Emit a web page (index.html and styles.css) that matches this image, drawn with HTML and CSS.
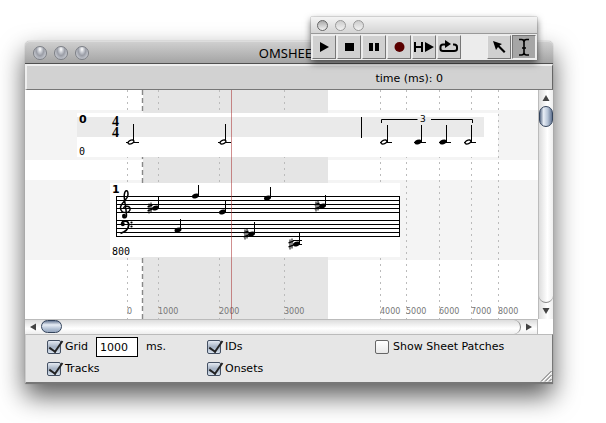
FILE: index.html
```html
<!DOCTYPE html>
<html lang="en">
<head>
<meta charset="utf-8">
<title>OMSHEET</title>
<link rel="stylesheet" href="styles.css">
</head>
<body>
<main class="window">
  <header class="titlebar">
    <div class="lights">
      <button class="light" aria-label="Close"></button>
      <button class="light" aria-label="Minimize"></button>
      <button class="light" aria-label="Zoom"></button>
    </div>
    <h1 class="title">OMSHEET</h1>
  </header>
  <div class="infobar"><span class="time">time (ms): 0</span></div>
  <div class="workspace">
    <svg class="score" role="img" aria-label="Score sheet">
      <defs>
        <g id="filled"><ellipse rx="3.6" ry="2.3" transform="rotate(-20)"/></g>
        <g id="half"><ellipse rx="3.1" ry="1.8" transform="rotate(-22)" fill="#fff" stroke="#000" stroke-width="1.3"/></g>
        <g id="sharp" stroke="#000" fill="none"><path d="M-1-4.500v10M1-5.500v10"/><path d="M-2.500-1.200l5-1.600M-2.500 2.800l5-1.600" stroke-width="1.300"/></g>
      </defs>
      <g transform="translate(-25 -90)">
        <rect class="track" x="25" y="110" width="100%" height="50"/>
        <rect class="track" x="25" y="180" width="100%" height="80"/>
        <rect class="range" x="143" y="90" width="185" height="230"/>
        <path class="grid" d="M127.500 90v230M158.500 90v230M219.500 90v230M284.500 90v230M380.500 90v230M406.500 90v230M439.500 90v230M471.500 90v230M498.500 90v230"/>
        <path class="start" d="M142.500 90v230"/>
        <rect class="paper" x="77" y="113" width="421" height="44"/>
        <rect class="bar" x="77" y="117" width="407" height="20"/>
        <rect class="paper" x="110" y="183" width="290" height="74"/>
        <g class="ticks">
          <text x="127" y="314">0</text><text x="158" y="314">1000</text><text x="219" y="314">2000</text><text x="284" y="314">3000</text><text x="380" y="314">4000</text><text x="406" y="314">5000</text><text x="439" y="314">6000</text><text x="471" y="314">7000</text><text x="498" y="314">8000</text>
        </g>
        <text class="id" x="79" y="123">0</text>
        <text class="onset" x="79" y="155">0</text>
        <text class="meter" x="112" y="126">4</text>
        <text class="meter" x="112" y="137">4</text>
        <path class="line" d="M133.500 124v18M126 142.500h13M225.500 124v18M218 142.500h13M361.500 117v21M387.500 125v17M380 142.500h12M421.500 125v17M414 142.500h12M446.500 125v17M439 142.500h12M471.500 125v17M464 142.500h12M381.500 123v-3.500h36M431 119.500h41.500v3.500"/>
        <text class="tuplet" x="420" y="122">3</text>
        <use href="#half" x="131" y="142"/><use href="#half" x="223" y="142"/><use href="#half" x="384" y="142"/><use href="#filled" x="418" y="142"/><use href="#filled" x="443" y="142"/><use href="#half" x="468" y="142"/>

        <text class="id" x="112" y="193">1</text>
        <text class="onset" x="112" y="255">800</text>
        <path class="line" d="M116 196.500h284M116 200.500h284M116 204.500h284M116 208.500h284M116 212.500h284M116 220.500h284M116 224.500h284M116 228.500h284M116 232.500h284M116 236.500h284M116.500 196v41M399.500 196v41M293 240.500h9M293 244.500h9"/>
        <path class="clef" d="M123.500 209c-.5-3.500 6-4 6.600-.3c.5 4.800-9 5.500-9.600-.5c-.6-5.200 7.300-8 7.500-13.700c.1-5.500-3-4.800-3.700 0c-.6 4.500 1.800 12 2.200 20.500c.1 3.500-3.500 3.500-3.700 1.500"/>
        <circle cx="124" cy="215.800" r="2"/>
        <path class="clef bass" d="M121.500 224.500c.8-5 7.500-4.500 7.200.8c-.3 4-3.500 6.500-8.200 8"/>
        <circle cx="122.800" cy="224.300" r="2"/><circle cx="131.500" cy="222.500" r="1.100"/><circle cx="131.500" cy="226.500" r="1.100"/>
        <path class="line" d="M158.500 197v11M180.500 219v11M198.500 185v11M225.500 201v11M254.500 222v12M270.500 187v11M325.500 195v11M299.500 233v11"/>
        <use href="#sharp" x="150" y="208"/><use href="#filled" x="155.500" y="208"/>
        <use href="#filled" x="178" y="230"/><use href="#filled" x="195.500" y="196"/><use href="#filled" x="222.500" y="212"/>
        <use href="#sharp" x="246" y="234"/><use href="#filled" x="251.500" y="234"/>
        <use href="#filled" x="267.500" y="198"/>
        <use href="#sharp" x="317" y="206"/><use href="#filled" x="322.500" y="206"/>
        <use href="#sharp" x="291" y="244"/><use href="#filled" x="296.500" y="244"/>
        <path class="playhead" d="M231.500 90v230"/>
      </g>
    </svg>
    <div class="vscroll">
      <button class="arrow" aria-label="Scroll up"><svg width="8" height="7"><path d="M4 0l3.500 6h-7z"/></svg></button>
      <div class="vtrack"><div class="vthumb"></div></div>
      <button class="arrow" aria-label="Scroll down"><svg width="8" height="7"><path d="M.5 0h7L4 6z"/></svg></button>
    </div>
    <div class="hscroll">
      <button class="arrow" aria-label="Scroll left"><svg width="7" height="8"><path d="M6 .5v7L0 4z"/></svg></button>
      <div class="htrack"><div class="hthumb"></div></div>
      <button class="arrow" aria-label="Scroll right"><svg width="7" height="8"><path d="M0 .5v7L6 4z"/></svg></button>
    </div>
  </div>
  <form class="options">
    <div class="row">
      <label class="check"><input type="checkbox" checked><span>Grid</span></label>
      <input class="step" type="text" value="1000" aria-label="Grid step in milliseconds">
      <span class="unit">ms.</span>
    </div>
    <label class="check"><input type="checkbox" checked><span>IDs</span></label>
    <label class="check"><input type="checkbox"><span>Show Sheet Patches</span></label>
    <label class="check"><input type="checkbox" checked><span>Tracks</span></label>
    <label class="check"><input type="checkbox" checked><span>Onsets</span></label>
    <svg class="grip" width="12" height="12" aria-hidden="true"><path d="M1 11.500L11.500 1M5 11.500L11.500 5M9 11.500L11.500 9" stroke="#666"/><path d="M2.500 11.500l9-9M6.500 11.500l5-5" stroke="#fff"/></svg>
  </form>
</main>
<aside class="palette" aria-label="Player">
  <div class="palette-title">
    <button class="dot dark" aria-label="Close palette"></button><button class="dot" aria-label="Minimize palette"></button><button class="dot" aria-label="Zoom palette"></button>
  </div>
  <div class="tools">
    <button class="tool" aria-label="Play"><svg viewBox="0 0 22 22"><path d="M7 6l9 5-9 5z"/></svg></button>
    <button class="tool" aria-label="Stop"><svg viewBox="0 0 22 22"><path d="M7 7h9v8H7z"/></svg></button>
    <button class="tool" aria-label="Pause"><svg viewBox="0 0 22 22"><path d="M6 7h4v8H6zM12 7h4v8h-4z"/></svg></button>
    <button class="tool" aria-label="Record"><svg viewBox="0 0 22 22"><circle cx="11.500" cy="11" r="5" fill="#5a0000"/></svg></button>
    <button class="tool" aria-label="Play from here"><svg viewBox="0 0 22 22"><path d="M1 6h2v4h5V6h2v10H8v-4H3v4H1zM12 6l9 5-9 5z"/></svg></button>
    <button class="tool" aria-label="Loop"><svg viewBox="0 0 22 22"><path d="M6 8.500H5Q2.500 8.500 2.500 11v2Q2.500 15 5 15h11q3 0 3-2v-2q0-2.500-3-2.500h-1M5 8.500h4" fill="none" stroke="#000" stroke-width="2"/><path d="M7 4l6 4-6 4z"/></svg></button>
    <span class="spacer"></span>
    <button class="tool" aria-label="Select"><svg viewBox="0 0 22 22"><path d="M5 5l9 3-2.500 1.500 6 6-1.500 1.500-6-6L8 14z"/></svg></button>
    <button class="tool active" aria-label="Text cursor"><svg viewBox="0 0 22 22"><path d="M6 3.500h2.500q2.500 0 2.500 2.500 0-2.500 2.500-2.500H16M11 6v11M6 19h2.500q2.500 0 2.500-2.500 0 2.500 2.500 2.500H16M9 12h4" fill="none" stroke="#000" stroke-width="1.600"/></svg></button>
  </div>
</aside>
</body>
</html>
```
FILE: styles.css
```css
* { box-sizing: border-box; }
body {
  margin: 0;
  padding: 41px 53px 39px 25px;
  background: #fff;
  color: #000;
  font: 11px/14px "DejaVu Sans", sans-serif;
}
button { margin: 0; padding: 0; border: 0; background: none; }
svg { display: block; }

.window {
  border-radius: 5px 5px 0 0;
  background: #e6e6e6;
  box-shadow: 0 0 1px #777, 0 12px 26px rgba(0, 0, 0, .65);
}
.titlebar {
  display: grid;
  grid-template-columns: 1fr auto 1fr;
  align-items: center;
  height: 23px;
  padding: 0 8px;
  border-top: 1px solid #ddd;
  border-bottom: 1px solid #505050;
  border-radius: 5px 5px 0 0;
  background: linear-gradient(#cfcfcf, #a4a4a4);
}
.lights { display: flex; gap: 7px; }
.light {
  width: 14px;
  height: 14px;
  border: 1px solid #7c7f86;
  border-radius: 50%;
  background: radial-gradient(ellipse at 50% 20%, #fff 0, #c4c7ce 25%, #9a9da6 45%, #dfe2e8 95%);
}
.title { margin: 0; font: 13px/18px "Noto Sans", sans-serif; }
.infobar {
  height: 26px;
  padding: 6px 0 0 66%;
  border: 1px solid #666;
  border-top: 2px solid #eee;
  border-left: 2px solid #eee;
  border-bottom: 1px solid #777;
  background: #d2d2d2;
}
.time { white-space: nowrap; }

.workspace {
  display: grid;
  grid-template-columns: 1fr 15px;
  grid-template-rows: 229px 15px;
  background: #fff;
}
.score { width: 100%; height: 100%; overflow: hidden; }
.track { fill: #f4f4f4; }
.range { fill: #e5e5e5; }
.bar { fill: #eaeaea; }
.paper { fill: #fff; }
.grid { stroke: #bbb; stroke-dasharray: 2 4; }
.start { stroke: #888; stroke-width: 1.4; stroke-dasharray: 5 3; }
.line { fill: none; stroke: #000; }
.clef { fill: none; stroke: #000; stroke-width: 1.5; }
.bass { stroke-width: 1.8; }
.playhead { stroke: #a33; stroke-opacity: .55; }
.ticks { fill: #777; font-size: 8px; }
.id { font-size: 11px; font-weight: bold; }
.onset { font: 10px "DejaVu Sans Mono", monospace; }
.meter { font: bold 14px "Liberation Serif", serif; }
.tuplet { font-size: 9px; }

.vscroll {
  display: flex;
  flex-direction: column;
  border-left: 1px solid #bbb;
  background: linear-gradient(90deg, #ddd, #fff 60%, #eee);
}
.hscroll {
  display: flex;
  border-top: 1px solid #bbb;
  border-right: 1px solid #bbb;
  background: linear-gradient(#ddd, #fff 60%, #eee);
}
.arrow { display: grid; place-items: center; flex: 0 0 16px; fill: #444; }
.vtrack { flex: 1; border-bottom: 1px solid #888; border-radius: 0 0 8px 8px; }
.htrack { flex: 1; border-right: 1px solid #888; border-radius: 0 8px 8px 0; }
.vthumb {
  height: 21px;
  border: 1px solid #34445c;
  border-radius: 7px;
  background: linear-gradient(90deg, #5c6d88, #e8eef6 30%, #b5c3d6 65%, #607290);
}
.hthumb {
  width: 21px;
  height: 13px;
  border: 1px solid #34445c;
  border-radius: 7px;
  background: linear-gradient(#6a7b97, #e8eef6 35%, #b5c3d6 70%, #95a5bd);
}

.options {
  position: relative;
  display: grid;
  grid-template-columns: 160px 168px 1fr;
  grid-template-rows: 22px 22px;
  align-items: center;
  height: 50px;
  padding: 1px 0 0 21px;
  border: 1px solid #777;
  border-top-color: #bbb;
  border-left-color: #ccc;
  border-bottom: 2px solid #777;
}
.row { display: flex; align-items: center; gap: 8px; }
.check { display: flex; align-items: center; gap: 4px; white-space: nowrap; }
.check input {
  appearance: none;
  width: 14px;
  height: 14px;
  margin: 0;
  border: 1px solid #666;
  border-radius: 2px;
  background: linear-gradient(#fff, #e8e8e8);
}
.check input:checked {
  position: relative;
  border-color: #445063;
  background: linear-gradient(#e4eaf2, #a5b2c4 50%, #d8e2ee);
}
.check input:checked::after {
  content: "";
  position: absolute;
  left: 4px;
  top: -3px;
  width: 6px;
  height: 12px;
  border: solid #222;
  border-width: 0 2px 2px 0;
  transform: rotate(35deg);
}
.step {
  width: 42px;
  height: 20px;
  padding: 0 3px;
  border: 1px solid #000;
  background: #fff;
  font: 11px/14px "DejaVu Sans", sans-serif;
}
.grip { position: absolute; right: 0; bottom: 0; }

.palette {
  position: absolute;
  top: 17px;
  right: 69px;
  background: #ececec;
  box-shadow: 0 0 1px #666, 0 3px 7px rgba(0, 0, 0, .6);
}
.palette-title {
  display: flex;
  align-items: center;
  gap: 7px;
  height: 17px;
  padding-left: 6px;
  border-bottom: 1px solid #999;
  background: linear-gradient(#f4f4f4, #d4d4d4);
}
.dot {
  width: 11px;
  height: 11px;
  border: 1px solid #999;
  border-radius: 50%;
  background: linear-gradient(#ccc, #f2f2f2);
}
.dark { border-color: #666; background: linear-gradient(#aaa, #f2f2f2); }
.tools { display: flex; gap: 1px; padding: 1px; }
.tool {
  width: 24px;
  height: 24px;
  border: 1px solid #777;
  border-top-color: #eee;
  border-left-color: #eee;
  background: #d0d0d0;
}
.active { border-color: #777 #eee #eee #777; background: #a6a6a6; }
.spacer { width: 24px; }
```
